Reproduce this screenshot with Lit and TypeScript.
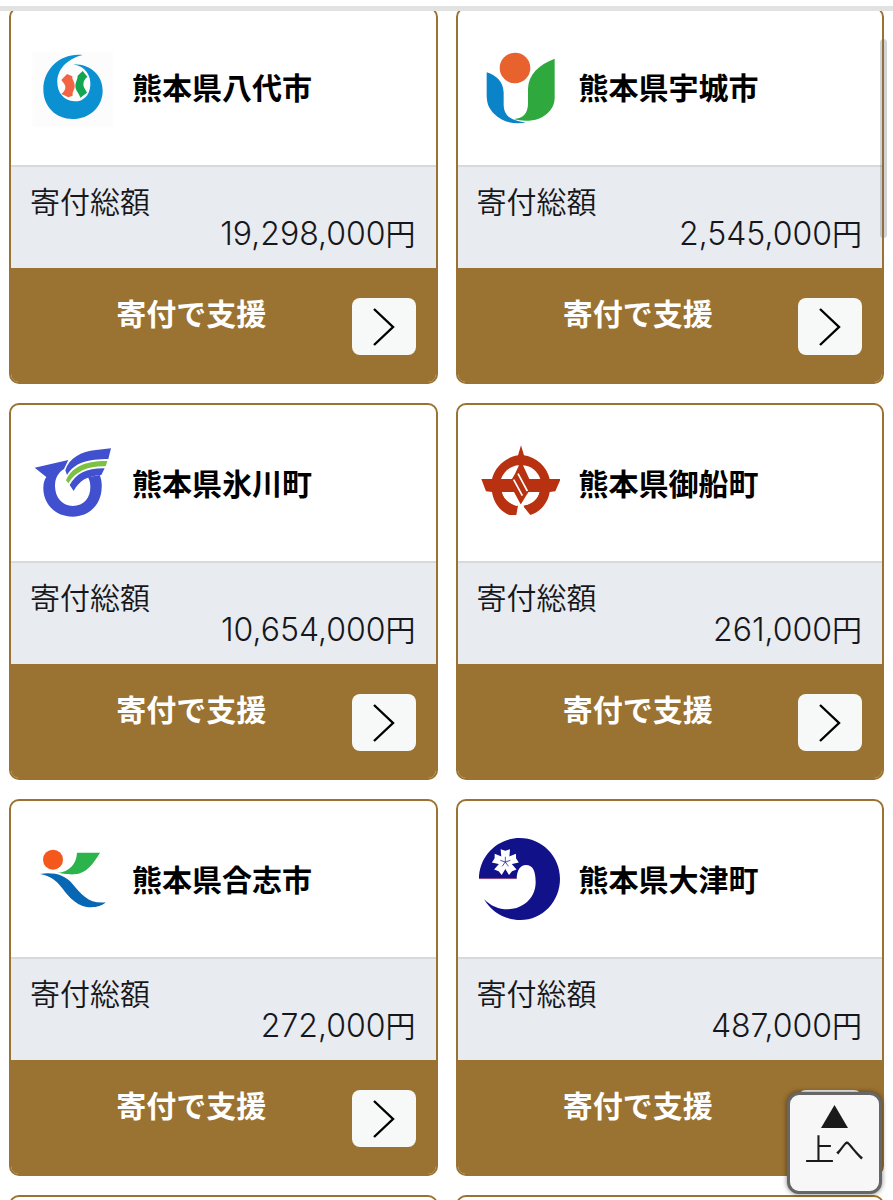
import { LitElement, html, svg, css, TemplateResult } from "lit";
import { customElement, property } from "lit/decorators.js";

interface Town {
  name: string;
  amount: string;
  viewBox: string;
  logo: TemplateResult;
}

const TOWNS: Town[] = [
  {
    name: "熊本県八代市",
    amount: "19,298,000",
    viewBox: "18 18 246 246",
    logo: svg`
      <rect x="22" y="36" width="242" height="226" fill="#fdfcfd" />
      <path fill="#0b90d2" d="M173 45 C108 38 55 86 55 148 C55 202 94 237 143 237 C194 237 233 200 233 152 C233 105 196 72 145 73 C182 80 198 106 196 137 C193 168 174 185 148 184 C116 182 97 158 97 127 C96 90 124 57 173 45 Z" />
      <path fill="#f26443" d="M126 102 L142 109 C140 118 149 125 149 138 C149 150 141 155 143 167 L130 172 L109 162 C121 152 124 142 118 132 L109 120 Z" />
      <path fill="#12a650" d="M173 93 L187 110 C176 120 173 130 177 142 L186 158 L166 173 C162 158 151 152 151 138 C151 126 158 119 158 107 Z" />
    `,
  },
  {
    name: "熊本県宇城市",
    amount: "2,545,000",
    viewBox: "22 18 246 246",
    logo: svg`
      <circle cx="133" cy="84" r="46" fill="#e8622d" />
      <path fill="#0b83c9" d="M48 97 C78 106 98 126 99 158 L99 192 C99 224 116 243 166 247 C132 255 94 246 70 221 C54 204 48 190 48 164 Z" />
      <path fill="#2fa83d" d="M252 56 C204 74 173 104 172 146 L172 192 C171 220 158 235 130 237 C151 244 181 244 204 236 C232 226 252 202 252 174 Z" />
    `,
  },
  {
    name: "熊本県氷川町",
    amount: "10,654,000",
    viewBox: "18 21 246 246",
    logo: svg`
      <path fill="#4150cf" d="M29 98 L130 75 L117 102 C98 114 90 130 90 154 C91 190 113 213 143 213 C177 213 196 188 196 156 C196 143 193 134 189 127 L224 120 C229 132 231 144 230 158 C229 209 191 245 143 245 C94 245 54 209 55 158 C55 145 58 135 64 126 Z" />
      <path fill="#4150cf" d="M258 40 L250 72 C190 72 149 82 126 120 L121 106 C131 71 169 48 213 45 Z" />
      <path fill="#7cc142" d="M247 78 L242 94 C188 93 153 108 130 145 L123 136 C139 98 179 77 247 78 Z" />
      <path fill="#4150cf" d="M239 100 L229 120 C187 123 163 136 146 168 L134 150 C154 114 187 99 239 100 Z" />
    `,
  },
  {
    name: "熊本県御船町",
    amount: "261,000",
    viewBox: "22 21 246 246",
    logo: svg`
      <g fill="#b83212">
        <path d="M151 31 L160 61 C196 66 229 95 237 132 L270 132 L254 169 L237 171 C233 201 211 230 179 240 L157 213 L163 211 C187 205 202 190 206 171 L170 171 L151 207 L132 171 L94 171 C99 191 113 205 142 212 L137 240 L116 240 C88 229 69 203 64 171 L46 169 L32 132 L64 132 C72 96 105 66 142 61 Z" />
      </g>
      <g fill="#fff">
        <path d="M91 132 C99 109 120 92 145 91 L133 116 L124 132 Z" />
        <path d="M157 91 C182 93 201 109 209 132 L176 132 Z" />
        <path d="M94 171 L132 171 L149 207 L137 213 C113 205 99 191 94 171 Z" />
        <path d="M206 171 L170 171 L155 207 L163 211 C187 205 202 190 206 171 Z" />
        <path d="M144 213 L151 209 L159 213 L164 242 L138 242 L144 222 Z" />
      </g>
      <path fill="#b83212" d="M150 98 L174 142 L174 170 L150 208 L128 167 L128 135 Z" />
      <path d="M129 134 L155 182 M142 116 L170 168" stroke="#fff" stroke-width="5" />
    `,
  },
  {
    name: "熊本県合志市",
    amount: "272,000",
    viewBox: "18 24 246 246",
    logo: svg`
      <circle cx="84" cy="89" r="30" fill="#f4581d" />
      <path fill="#2bb34c" d="M156 68 L225 68 C204 102 184 131 148 133 C124 134 112 129 98 129 C133 124 154 104 156 68 Z" />
      <path fill="#0767b4" d="M45 132 C85 126 119 134 142 161 C170 195 193 222 242 217 C227 233 194 235 173 228 C135 214 119 180 96 157 C82 143 66 136 45 132 Z" />
    `,
  },
  {
    name: "熊本県大津町",
    amount: "487,000",
    viewBox: "25 24 246 246",
    logo: svg`
      <path fill="#11128a" d="M28 146 C28 79 82 24 150 24 C217 24 271 79 271 146 C271 214 219 270 152 270 C106 270 66 247 43 207 C77 244 130 246 163 223 C187 207 198 183 198 157 C198 124 190 105 169 105 C151 105 142 121 141 146 Z" />
      <path stroke="#a8526c" stroke-width="2" d="M29 146 L141 146" />
      <g fill="#fff">
        ${[0, 72, 144, 216, 288].map(
          (a) => svg`<path transform="rotate(${a} 107 96)" d="M107 97 L95 82 L93 58 L107 62 L121 58 L119 82 Z" />`
        )}
      </g>
      <g stroke="#11128a" stroke-width="2">
        ${[0, 72, 144, 216, 288].map(
          (a) => svg`<path transform="rotate(${a} 107 96)" d="M107 96 L107 80" />`
        )}
      </g>
    `,
  },
];

@customElement("town-card")
export class TownCard extends LitElement {
  static styles = css`
    :host {
      display: block;
      box-sizing: border-box;
      border: 2px solid #9a7231;
      border-radius: 10px;
      background-color: #fff;
      overflow: hidden;
    }

    .head {
      display: flex;
      align-items: center;
      gap: 19px;
      padding: 37px 20px;
    }

    .logo {
      flex: none;
      width: 82px;
      height: 82px;
    }

    .name {
      margin: 0;
      padding-bottom: 2px;
      font-size: 30px;
      line-height: 32px;
      font-weight: 700;
      color: #000;
    }

    .total {
      margin: 0;
      padding: 17px 20px 20px 19px;
      border-top: 2px solid #d6dadd;
      background-color: #e8ebef;
      font-size: 30px;
      line-height: 32px;
      font-weight: 350;
      color: #16171c;
    }

    .value {
      display: flex;
      justify-content: flex-end;
      height: 32px;
      margin: 0;
    }

    .number {
      font-family: Inter, "Noto Sans CJK JP", sans-serif;
      font-size: 32px;
      line-height: 36px;
      font-weight: 300;
    }

    .action {
      display: flex;
      align-items: flex-start;
      padding: 30px 20px 27px;
      background-color: #9a7231;
      color: #fff;
      text-decoration: none;
    }

    .action-text {
      flex: 1;
      text-align: center;
      font-size: 30px;
      line-height: 28px;
      font-weight: 700;
    }

    .arrow {
      box-sizing: border-box;
      width: 64px;
      height: 57px;
      border-radius: 8px;
      background-color: #f7f9f9;
    }
  `;

  @property({ attribute: false }) town!: Town;

  render() {
    return html`
      <div class="head">
        <svg class="logo" viewBox=${this.town.viewBox} aria-hidden="true">
          ${this.town.logo}
        </svg>
        <h2 class="name">${this.town.name}</h2>
      </div>
      <dl class="total">
        <dt>寄付総額</dt>
        <dd class="value">
          <span class="number">${this.town.amount}</span>
          <span>円</span>
        </dd>
      </dl>
      <a class="action" href="#">
        <span class="action-text">寄付で支援</span>
        <svg class="arrow" viewBox="0 0 64 57" aria-hidden="true">
          <path d="M22 11 L41 29 L22 47" fill="none" stroke="#000" stroke-width="2.4" />
        </svg>
      </a>
    `;
  }
}

@customElement("app-root")
export class AppRoot extends LitElement {
  static styles = css`
    :host {
      display: block;
      height: 100vh;
      overflow: hidden;
      background-color: #fff;
      font-family: "Noto Sans CJK JP", sans-serif;
    }

    .bar {
      position: relative;
      z-index: 1;
      height: 6px;
      border-bottom: 5px solid #e2e2e3;
      background-color: #fff;
    }

    /* the list is scrolled a little way under the bar */
    .list {
      display: grid;
      grid-template-columns: 1fr 1fr;
      gap: 19px 18px;
      margin-top: -4px;
      padding: 0 9px;
    }

    .next {
      height: 40px;
      border: 2px solid #9a7231;
      border-radius: 10px;
    }

    .thumb {
      position: fixed;
      top: 39px;
      right: 6px;
      width: 7px;
      height: 199px;
      border-radius: 4px;
      background-color: rgba(110, 110, 110, 0.3);
    }

    .to-top {
      position: fixed;
      right: 11px;
      bottom: 6px;
      display: flex;
      flex-direction: column;
      align-items: center;
      gap: 3px;
      width: 95px;
      height: 102px;
      padding: 10px 0 0;
      border: 3px solid #666;
      border-radius: 12px;
      background-color: #f7f7f7;
      box-shadow: 0 0 5px rgba(0, 0, 0, 0.5);
      font-family: inherit;
      font-size: 30px;
      line-height: 32px;
      font-weight: 350;
      color: #1a1a1a;
    }

    .up {
      width: 27px;
      height: 23px;
    }
  `;

  render() {
    return html`
      <header class="bar"></header>
      <main class="list">
        ${TOWNS.map((town) => html`<town-card .town=${town}></town-card>`)}
        <div class="next"></div>
        <div class="next"></div>
      </main>
      <div class="thumb"></div>
      <button class="to-top" type="button">
        <svg class="up" viewBox="0 0 27 23" aria-hidden="true">
          <path d="M13.5 0 L27 23 H0 Z" fill="currentColor" />
        </svg>
        <span>上へ</span>
      </button>
    `;
  }
}
